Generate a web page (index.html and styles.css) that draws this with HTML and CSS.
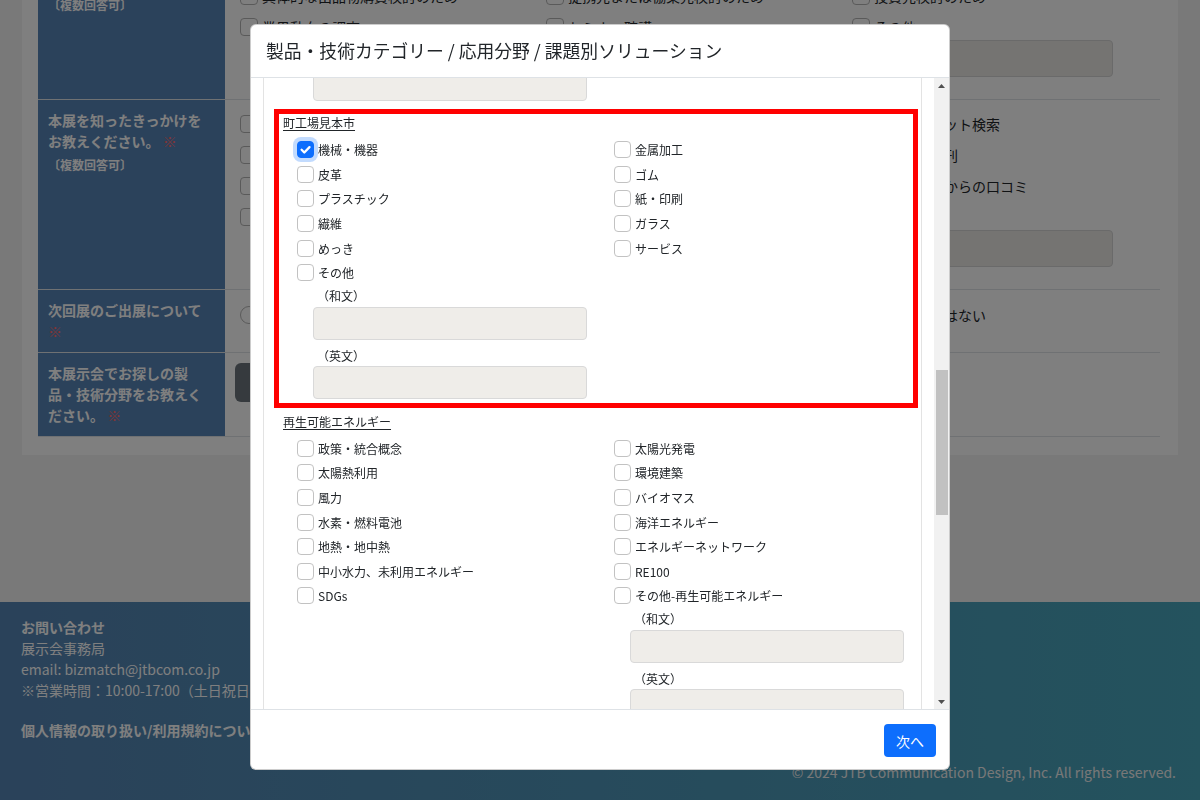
FILE: index.html
```html
<!DOCTYPE html>
<html lang="ja">
<head>
<meta charset="utf-8">
<title>来場登録</title>
<link rel="stylesheet" href="styles.css">
</head>
<body>
<div class="page">
  <main class="card">
    <div class="form-table">
      <div class="frow">
        <div class="flabel">本展示会へご来場いただいた目的をお教えください。 <span class="req">※</span><div class="multi">〔複数回答可〕</div></div>
        <div class="fcell r1">
          <div class="fcol">
            <div class="bg-item"><span class="bg-box"></span>新製品・新技術の情報収集</div>
            <div class="bg-item"><span class="bg-box"></span>取引先・仕入先の開拓</div>
            <div class="bg-item"><span class="bg-box"></span>具体的な出品物購買検討のため</div>
            <div class="bg-item"><span class="bg-box"></span>業界動向の調査</div>
          </div>
          <div class="fcol">
            <div class="bg-item"><span class="bg-box"></span>技術提携先の探索</div>
            <div class="bg-item"><span class="bg-box"></span>販路開拓のため</div>
            <div class="bg-item"><span class="bg-box"></span>提携先または協業先検討のため</div>
            <div class="bg-item"><span class="bg-box"></span>セミナー聴講</div>
          </div>
          <div class="fcol">
            <div class="bg-item"><span class="bg-box"></span>海外企業との商談</div>
            <div class="bg-item"><span class="bg-box"></span>市場調査のため</div>
            <div class="bg-item"><span class="bg-box"></span>投資先検討のため</div>
            <div class="bg-item"><span class="bg-box"></span>その他</div>
            <input class="bg-input" type="text">
          </div>
        </div>
      </div>
      <div class="frow">
        <div class="flabel">本展を知ったきっかけをお教えください。 <span class="req">※</span><div class="multi">〔複数回答可〕</div></div>
        <div class="fcell r2">
          <div class="fcol">
            <div class="bg-item"><span class="bg-box"></span>展示会公式ホームページ</div>
            <div class="bg-item"><span class="bg-box"></span>招待状・案内状</div>
            <div class="bg-item"><span class="bg-box"></span>メールマガジン</div>
            <div class="bg-item"><span class="bg-box"></span>SNS</div>
          </div>
          <div class="fcol">
            <div class="bg-item"><span class="bg-box"></span>業界団体からの案内</div>
            <div class="bg-item"><span class="bg-box"></span>出展社からの案内</div>
            <div class="bg-item"><span class="bg-box"></span>新聞・雑誌広告</div>
            <div class="bg-item"><span class="bg-box"></span>Web広告</div>
          </div>
          <div class="fcol">
            <div class="bg-item"><span class="bg-box"></span>インターネット検索</div>
            <div class="bg-item"><span class="bg-box"></span>業界誌・月刊</div>
            <div class="bg-item"><span class="bg-box"></span>知人・同僚からの口コミ</div>
            <div class="bg-item"><span class="bg-box"></span>その他</div>
            <input class="bg-input" type="text">
          </div>
        </div>
      </div>
      <div class="frow">
        <div class="flabel">次回展のご出展について <span class="req">※</span></div>
        <div class="fcell r3">
          <div class="fcol"><div class="bg-item"><span class="bg-radio"></span>出展したい</div></div>
          <div class="fcol"><div class="bg-item"><span class="bg-radio"></span>出展を検討したい</div></div>
          <div class="fcol"><div class="bg-item"><span class="bg-radio"></span>出展の予定はない</div></div>
        </div>
      </div>
      <div class="frow">
        <div class="flabel">本展示会でお探しの製品・技術分野をお教えください。 <span class="req">※</span></div>
        <div class="fcell r4">
          <button class="bg-btn" type="button">選択する</button>
        </div>
      </div>
    </div>
  </main>
  <footer class="site-footer">
    <div class="contact">
      <p class="f-title">お問い合わせ</p>
      <p>展示会事務局</p>
      <p>email: bizmatch@jtbcom.co.jp</p>
      <p>※営業時間：10:00-17:00（土日祝日を除く）</p>
      <p class="f-title f-policy">個人情報の取り扱い/利用規約について</p>
    </div>
    <p class="copyright">© 2024 JTB Communication Design, Inc. All rights reserved.</p>
  </footer>
</div>

<div class="backdrop"></div>

<div class="modal" role="dialog">
  <div class="modal-header">
    <h5 class="modal-title">製品・技術カテゴリー / 応用分野 / 課題別ソリューション</h5>
  </div>
  <div class="modal-body">
    <div class="scroll-area">
      <div class="cat-list">
        <div class="cat cat-prev">
          <div class="cat-grid">
            <div class="cat-col">
              <div class="other"><input class="txt" type="text"></div>
            </div>
            <div class="cat-col"></div>
          </div>
        </div>

        <section class="cat highlight">
          <div class="cat-title">町工場見本市</div>
          <div class="cat-grid">
            <div class="cat-col">
              <label class="chk"><span class="box checked"><svg viewBox="0 0 17 17" width="17" height="17"><path d="M4.6 8.8l2.7 2.7 5.2-5.4" fill="none" stroke="#fff" stroke-width="2.3" stroke-linecap="round" stroke-linejoin="round"/></svg></span>機械・機器</label>
              <label class="chk"><span class="box"></span>皮革</label>
              <label class="chk"><span class="box"></span>プラスチック</label>
              <label class="chk"><span class="box"></span>繊維</label>
              <label class="chk"><span class="box"></span>めっき</label>
              <label class="chk"><span class="box"></span>その他</label>
              <div class="other">
                <div class="other-label">（和文）</div>
                <input class="txt" type="text">
                <div class="other-label en">（英文）</div>
                <input class="txt" type="text">
              </div>
            </div>
            <div class="cat-col">
              <label class="chk"><span class="box"></span>金属加工</label>
              <label class="chk"><span class="box"></span>ゴム</label>
              <label class="chk"><span class="box"></span>紙・印刷</label>
              <label class="chk"><span class="box"></span>ガラス</label>
              <label class="chk"><span class="box"></span>サービス</label>
            </div>
          </div>
        </section>

        <section class="cat">
          <div class="cat-title">再生可能エネルギー</div>
          <div class="cat-grid">
            <div class="cat-col">
              <label class="chk"><span class="box"></span>政策・統合概念</label>
              <label class="chk"><span class="box"></span>太陽熱利用</label>
              <label class="chk"><span class="box"></span>風力</label>
              <label class="chk"><span class="box"></span>水素・燃料電池</label>
              <label class="chk"><span class="box"></span>地熱・地中熱</label>
              <label class="chk"><span class="box"></span>中小水力、未利用エネルギー</label>
              <label class="chk"><span class="box"></span>SDGs</label>
            </div>
            <div class="cat-col">
              <label class="chk"><span class="box"></span>太陽光発電</label>
              <label class="chk"><span class="box"></span>環境建築</label>
              <label class="chk"><span class="box"></span>バイオマス</label>
              <label class="chk"><span class="box"></span>海洋エネルギー</label>
              <label class="chk"><span class="box"></span>エネルギーネットワーク</label>
              <label class="chk"><span class="box"></span>RE100</label>
              <label class="chk"><span class="box"></span>その他-再生可能エネルギー</label>
              <div class="other">
                <div class="other-label">（和文）</div>
                <input class="txt" type="text">
                <div class="other-label en">（英文）</div>
                <input class="txt" type="text">
              </div>
            </div>
          </div>
        </section>
      </div>
    </div>
    <div class="scrollbar" aria-hidden="true">
      <div class="sb-btn"><svg width="7" height="4" viewBox="0 0 7 4"><polygon points="3.5,0 7,4 0,4" fill="#505050"/></svg></div>
      <div class="sb-track"><div class="sb-thumb"></div></div>
      <div class="sb-btn"><svg width="7" height="4" viewBox="0 0 7 4"><polygon points="0,0 7,0 3.5,4" fill="#505050"/></svg></div>
    </div>
  </div>
  <div class="modal-footer">
    <button class="btn-primary" type="button">次へ</button>
  </div>
</div>
</body>
</html>
```

FILE: styles.css
```css
* { box-sizing: border-box; }
html, body { margin: 0; height: 100%; }
body {
  font-family: "Noto Sans CJK JP", "Noto Sans", sans-serif;
  background: #f3f3f3;
  color: #212529;
  overflow: hidden;
}
p { margin: 0; }

/* ---------- background page ---------- */
.card {
  margin: -81px 22px 147px;
  background: #fff;
  padding: 0 18px 18px 16px;
}
.frow {
  display: grid;
  grid-template-columns: 187px 1fr;
  border-bottom: 1px solid #dee2e6;
}
.flabel {
  background: #5784b6;
  color: #fff;
  font-weight: 700;
  font-size: 14px;
  line-height: 21px;
  padding: 10px;
}
.req { color: #ff6a6a; }
.multi { font-size: 12px; margin-top: 2px; }
.fcell {
  display: grid;
  grid-template-columns: repeat(3, 1fr);
  align-items: start;
  padding: 12px 7px 22px 10px;
}
.fcell.r1 { padding-top: 3px; }
.fcell.r3 { padding: 13px 7px 0 10px; }
.fcell.r4 { display: block; padding: 10px 7px 0 10px; }
.fcol { padding-left: 5px; }
.bg-item {
  display: flex;
  align-items: center;
  height: 24px;
  font-size: 14px;
  white-space: nowrap;
}
.bg-item + .bg-item { margin-top: 7px; }
.bg-box, .bg-radio {
  width: 18px;
  height: 18px;
  border: 1px solid #b5b5b5;
  border-radius: 4px;
  margin-right: 4px;
  background: #fff;
  flex: none;
}
.bg-radio { border-radius: 50%; }
.bg-input {
  display: block;
  margin: 1px 0 0 18px;
  width: 243px;
  height: 37px;
  background: #ebe9e5;
  border: 1px solid #d4d4d4;
  border-radius: 4px;
}
.bg-btn {
  height: 39px;
  width: 130px;
  background: #6c757d;
  color: #fff;
  border: 0;
  border-radius: 6px;
  font: inherit;
  font-size: 14px;
}

.site-footer {
  background: linear-gradient(90deg, #5584b4 0%, #4e95b8 50%, #48a6bc 100%);
  color: #fff;
  padding: 15px 24px 30px 21px;
  font-size: 14px;
  line-height: 21px;
}
.f-title { font-weight: 700; }
.f-policy { margin-top: 19px; }
.copyright {
  margin-top: 21px;
  text-align: right;
  color: #f0f0f0;
}

/* ---------- backdrop / modal ---------- */
.backdrop {
  position: fixed;
  inset: 0;
  background: rgba(0, 0, 0, 0.5);
  z-index: 10;
}
.modal {
  position: fixed;
  top: 24px;
  left: 250px;
  width: 700px;
  height: 746px;
  z-index: 20;
  background: #fff;
  border: 1px solid rgba(0, 0, 0, 0.2);
  border-radius: 6px;
  display: flex;
  flex-direction: column;
  overflow: hidden;
}
.modal-header {
  padding: 14px 16px 16px 15px;
  border-bottom: 1px solid #dee2e6;
  flex: none;
}
.modal-title {
  margin: 0;
  font-size: 17.8px;
  line-height: 22px;
  font-weight: 400;
  color: #212529;
  white-space: nowrap;
}
.modal-body {
  flex: 1;
  min-height: 0;
  display: flex;
}
.scroll-area {
  flex: 1;
  min-width: 0;
  overflow: hidden;
}
.cat-list {
  margin: 0 12px;
  border-left: 1px solid #e3e3e3;
  border-right: 1px solid #e3e3e3;
  min-height: 100%;
}
.cat {
  margin: 0 8px 0 15px;
  padding-bottom: 4px;
}
.cat + .cat { margin-top: 9.5px; }
.cat-prev { margin-top: -11px; }
.highlight { outline: 5px solid #ff0000; }
.cat-title {
  font-size: 12px;
  line-height: 18px;
  padding-left: 4px;
  text-decoration: underline;
  text-underline-offset: 2px;
}
.cat-grid {
  display: grid;
  grid-template-columns: 1fr 1fr;
  margin-top: 5.5px;
}
.cat-prev .cat-grid { margin-top: 0; }
.cat-col { padding-left: 18px; }
.chk {
  display: flex;
  align-items: center;
  height: 24.6px;
  font-size: 12px;
  white-space: nowrap;
}
.box {
  width: 17px;
  height: 17px;
  border: 1px solid #c2c2c2;
  border-radius: 4px;
  margin-right: 4px;
  background: #fff;
  flex: none;
  display: flex;
}
.box svg { display: block; margin: -1px; }
.box.checked {
  background: #0d6efd;
  border-color: #0d6efd;
  box-shadow: 0 0 0 4px rgba(13, 110, 253, 0.25);
}
.other { margin-left: 16px; width: 274px; }
.other-label {
  height: 21px;
  line-height: 21px;
  padding-left: 4px;
  font-size: 12px;
}
.other-label.en { margin-top: 5px; }
.txt {
  display: block;
  width: 274px;
  height: 33px;
  margin-top: 0.5px;
  background: #efede9;
  border: 1px solid #d9d9d9;
  border-radius: 4px;
}

.scrollbar {
  width: 15px;
  flex: none;
  background: #f1f1f1;
  display: flex;
  flex-direction: column;
}
.sb-btn {
  height: 15px;
  flex: none;
  display: flex;
  align-items: center;
  justify-content: center;
}
.sb-track { flex: 1; }
.sb-thumb {
  margin: 277px 1px 0 2px;
  height: 145px;
  background: #c1c1c1;
}

.modal-footer {
  flex: none;
  border-top: 1px solid #dee2e6;
  padding: 14px 13px 12px;
  display: flex;
  justify-content: flex-end;
}
.btn-primary {
  height: 33px;
  padding: 0 12px;
  background: #0d6efd;
  color: #fff;
  border: 0;
  border-radius: 4px;
  font: inherit;
  font-size: 14px;
}
```
